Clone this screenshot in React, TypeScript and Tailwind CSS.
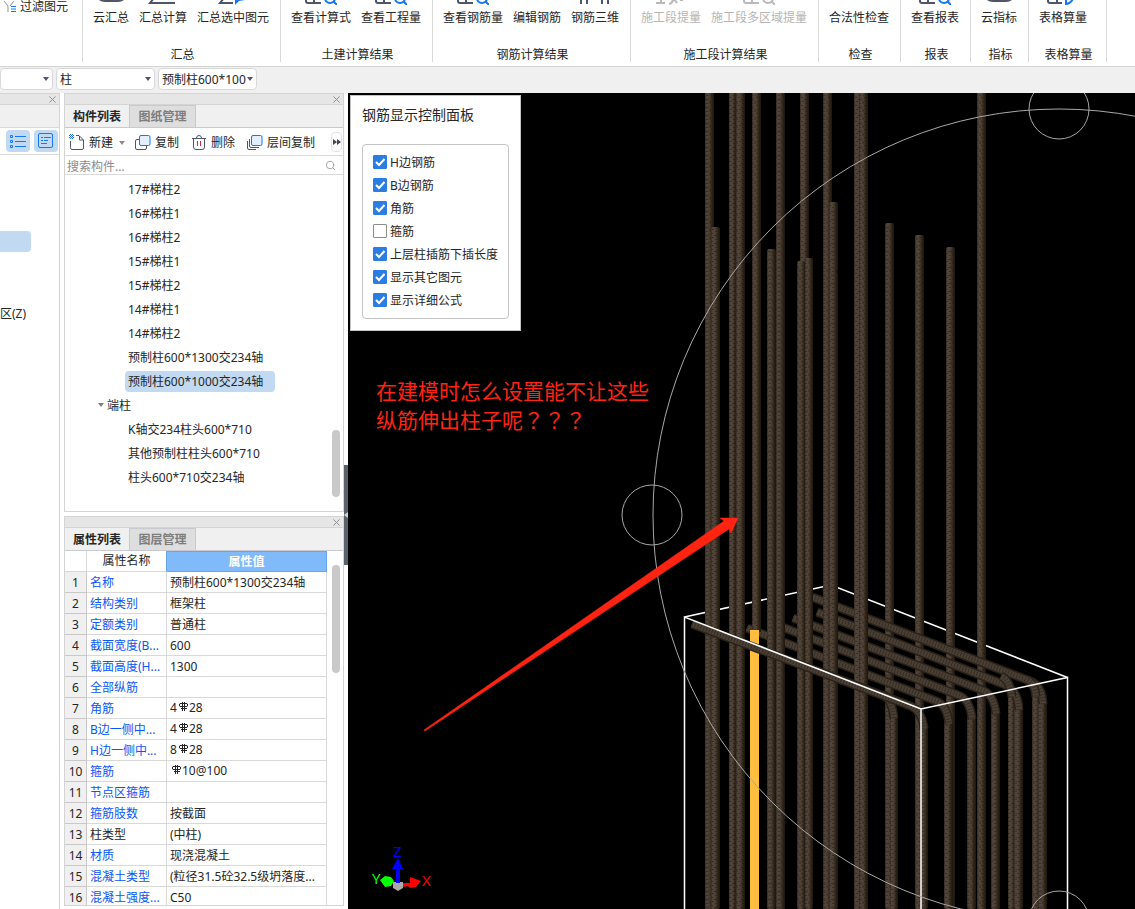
import { X, Search } from 'lucide-react';

type IconKind = 'cloud' | 'sum' | 'sumSelect' | 'view' | 'none' | 'rebar' | 'section' | 'sheet';

interface RibbonItem {
  label: string;
  icon: IconKind;
  disabled?: boolean;
}

interface RibbonGroup {
  title: string;
  width: string;
  items: RibbonItem[];
}

const ribbon: RibbonGroup[] = [
  {
    title: '汇总',
    width: 'w-[198px]',
    items: [
      { label: '云汇总', icon: 'cloud' },
      { label: '汇总计算', icon: 'sum' },
      { label: '汇总选中图元', icon: 'sumSelect' },
    ],
  },
  {
    title: '土建计算结果',
    width: 'w-[152px]',
    items: [
      { label: '查看计算式', icon: 'view' },
      { label: '查看工程量', icon: 'view' },
    ],
  },
  {
    title: '钢筋计算结果',
    width: 'w-[198px]',
    items: [
      { label: '查看钢筋量', icon: 'view' },
      { label: '编辑钢筋', icon: 'none' },
      { label: '钢筋三维', icon: 'rebar' },
    ],
  },
  {
    title: '施工段计算结果',
    width: 'w-[188px]',
    items: [
      { label: '施工段提量', icon: 'section', disabled: true },
      { label: '施工段多区域提量', icon: 'view', disabled: true },
    ],
  },
  { title: '检查', width: 'w-[82px]', items: [{ label: '合法性检查', icon: 'none' }] },
  { title: '报表', width: 'w-[70px]', items: [{ label: '查看报表', icon: 'view' }] },
  { title: '指标', width: 'w-[58px]', items: [{ label: '云指标', icon: 'cloud' }] },
  { title: '表格算量', width: 'w-[78px]', items: [{ label: '表格算量', icon: 'sheet' }] },
];

const components = [
  '17#梯柱2',
  '16#梯柱1',
  '16#梯柱2',
  '15#梯柱1',
  '15#梯柱2',
  '14#梯柱1',
  '14#梯柱2',
  '预制柱600*1300交234轴',
  '预制柱600*1000交234轴',
];

const endColumns = ['K轴交234柱头600*710', '其他预制柱柱头600*710', '柱头600*710交234轴'];

interface Property {
  name: string;
  value: string;
  // bar diameter and spacing, drawn after the rebar grade sign
  bar?: string;
  plain?: boolean;
}

const properties: Property[] = [
  { name: '名称', value: '预制柱600*1300交234轴' },
  { name: '结构类别', value: '框架柱' },
  { name: '定额类别', value: '普通柱' },
  { name: '截面宽度(B...', value: '600' },
  { name: '截面高度(H...', value: '1300' },
  { name: '全部纵筋', value: '' },
  { name: '角筋', value: '4', bar: '28' },
  { name: 'B边一侧中...', value: '4', bar: '28' },
  { name: 'H边一侧中...', value: '8', bar: '28' },
  { name: '箍筋', value: '', bar: '10@100' },
  { name: '节点区箍筋', value: '' },
  { name: '箍筋肢数', value: '按截面' },
  { name: '柱类型', value: '(中柱)', plain: true },
  { name: '材质', value: '现浇混凝土' },
  { name: '混凝土类型', value: '(粒径31.5砼32.5级坍落度...' },
  { name: '混凝土强度...', value: 'C50' },
];

const displayOptions = [
  { label: 'H边钢筋', checked: true },
  { label: 'B边钢筋', checked: true },
  { label: '角筋', checked: true },
  { label: '箍筋', checked: false },
  { label: '上层柱插筋下插长度', checked: true },
  { label: '显示其它图元', checked: true },
  { label: '显示详细公式', checked: true },
];

// x, top, bottom, width
type Bar = [number, number, number, number];

const backBars: Bar[] = [
  [885, 223, 909, 9],
  [915, 235, 909, 9],
  [946, 247, 909, 9],
  [977, 93, 909, 9],
  [890, 714, 909, 8],
  [920, 724, 909, 8],
  [944, 720, 909, 9],
  [967, 716, 909, 9],
  [991, 710, 909, 9],
  [1008, 694, 909, 8],
  [1014, 706, 909, 9],
  [1032, 694, 909, 9],
  [1038, 700, 909, 9],
];

const frontBars: Bar[] = [
  [705, 93, 909, 9],
  [711, 227, 909, 9],
  [729, 93, 909, 8],
  [736, 93, 909, 9],
  [752, 93, 632, 9],
  [767, 249, 909, 9],
  [776, 93, 909, 9],
  [800, 93, 262, 9],
  [797, 261, 909, 9],
  [805, 258, 909, 8],
  [823, 93, 909, 9],
  [829, 202, 272, 9],
  [829, 272, 909, 9],
  [854, 93, 909, 9],
  [859, 93, 909, 9],
];

const bentBars = [
  'M812 597 L1030 681 Q1042 685 1043 704',
  'M817 612 L1003 684 Q1018 689 1019 710',
  'M793 618 L982 690 Q994 694 996 714',
  'M777 625 L958 695 Q970 699 972 719',
  'M747 628 L936 701 Q947 705 949 724',
  'M1001 676 Q1010 680 1012 697',
  'M1028 680 Q1035 684 1036 697',
  'M882 694 Q892 699 894 718',
];

const frontBent = 'M692 624 L908 705 Q922 709 924 729';

const RibbonIcon = ({ kind, disabled }: { kind: IconKind; disabled?: boolean }) => {
  const dark = disabled ? '#b9b9b9' : '#50566a';
  const blue = disabled ? '#b9b9b9' : '#1677ee';
  return (
    <svg viewBox="0 0 32 5" className="h-[5px] w-8" fill="none" strokeWidth={2}>
      {kind === 'cloud' && <path d="M2 -2 Q5 2 10 2 H23 Q28 2 31 -2 Z" fill={dark} />}
      {kind === 'sum' && <path d="M7 -2 L3 3 H28" stroke={dark} />}
      {kind === 'sumSelect' && (
        <>
          <path d="M7 -2 L3 3 H16" stroke={dark} />
          <path d="M18 -2 L18 5 L22 1 L28 0 Z" fill={blue} />
        </>
      )}
      {kind === 'view' && (
        <>
          <path d="M1 -2 V1 Q1 3 3 3 H16 M9 -2 V3" stroke={dark} />
          <circle cx={25} cy={-2} r={5} stroke={blue} />
          <path d="M28 1 L32 5" stroke={blue} />
        </>
      )}
      {kind === 'rebar' && <path d="M2 -1 V4 M8 -1 V4 M23 -1 V4 M29 -1 V4" stroke={dark} />}
      {kind === 'section' && <path d="M1 3 H10 M6 -1 V3 M14 4 Q18 3 18 -1 M19 -1 L22 3 M25 0 H28" stroke={dark} />}
      {kind === 'sheet' && (
        <>
          <path d="M1 -2 V1 Q1 3 3 3 H15 M10 -2 V3" stroke={dark} />
          <path d="M19 -1 V4 Q23 4 26 -1" stroke={blue} />
        </>
      )}
    </svg>
  );
};

const Caret = ({ className }: { className: string }) => (
  <svg viewBox="0 0 6 4" className={`h-1 w-1.5 ${className}`}>
    <path d="M0 0 H6 L3 4 Z" fill="currentColor" />
  </svg>
);

const Dropdown = ({ label, value, width }: { label: string; value: string; width: string }) => (
  <div className={`relative h-[22px] shrink-0 ${width}`}>
    <select
      aria-label={label}
      className="h-full w-full appearance-none overflow-hidden rounded-sm border border-[#d9d9d9] bg-white pt-0.5 pr-2 pl-[3px] text-xs leading-[18px] text-[#262626]"
    >
      <option>{value}</option>
    </select>
    <Caret className="pointer-events-none absolute top-[9px] right-1 text-[#50566a]" />
  </div>
);

const TitleStrip = () => (
  <div className="flex h-3 shrink-0 items-center justify-end border-y border-[#d4d4d4] bg-[#e6e6e6] pr-0.5">
    <button type="button" aria-label="关闭">
      <X className="h-[9px] w-[9px] scale-125 text-[#8c8c8c]" strokeWidth={2} />
    </button>
  </div>
);

const Tabs = ({ active, other }: { active: string; other: string }) => (
  <div className="flex h-[23px] shrink-0 border-b border-[#c9cad0] bg-[#f0f0f0] text-xs font-bold">
    <button type="button" className="w-16 bg-[#f0f0f0] pt-0.5 text-[#262626]">{active}</button>
    <button type="button" className="w-[67px] border-x border-t border-[#c9cad0] bg-[#dedede] pt-px text-[#7d7d7d]">{other}</button>
  </div>
);

const CopyIcon = ({ layers }: { layers?: boolean }) => (
  <svg viewBox="0 0 16 16" className="mb-0.5 h-4 w-4" fill="none" strokeWidth={1}>
    {layers ? (
      <path d="M2.500 5 V12 Q2.500 13.500 4 13.500 H12 M.5 7 V14 Q.5 15.500 2 15.500 H9" stroke="#50566a" />
    ) : (
      <path d="M4 5.500 H2 Q.5 5.500 .5 7 V14 Q.5 15.500 2 15.500 H10 Q11.500 15.500 11.500 14 V12" stroke="#50566a" />
    )}
    <rect x={4.500} y={1.500} width={10.500} height={10} rx={1.500} fill="#e2efff" stroke="#1677ee" />
  </svg>
);

const RebarSign = () => (
  <svg viewBox="0 0 12 11" className="mb-1 h-[11px] w-3" fill="none" stroke="#262626" strokeWidth={1}>
    <path d="M3 2.500 H10 L10.500 3 V5 L10 5.500 H3 L2.500 5 V3 Z M5.500 1 V10 M7.500 1 V10 M4 7.500 H10" />
  </svg>
);

const BarShape = ({ bar }: { bar: Bar }) => {
  const [x, top, bottom, width] = bar;
  return (
    <g>
      <rect x={x} y={top} width={width} height={bottom - top} rx={top > 93 ? 2 : 0} fill="url(#steel)" />
      <rect x={x} y={top + 2} width={width} height={bottom - top - 2} fill="url(#ribs)" />
    </g>
  );
};

const BentShape = ({ d }: { d: string }) => (
  <g fill="none">
    <path d={d} stroke="#2a2219" strokeWidth={9} />
    <path d={d} stroke="#4b4035" strokeWidth={6} />
    <path d={d} stroke="#352c23" strokeWidth={5} strokeDasharray="1 2" />
  </g>
);

const Scene = () => (
  <svg viewBox="348 93 787 816" preserveAspectRatio="xMinYMin slice" className="absolute inset-0 h-full w-full">
    <defs>
      <linearGradient id="steel">
        <stop offset="0" stopColor="#352c25" />
        <stop offset="0.2" stopColor="#54473c" />
        <stop offset="0.5" stopColor="#4b3f35" />
        <stop offset="0.7" stopColor="#35291a" />
        <stop offset="1" stopColor="#1b150d" />
      </linearGradient>
      <pattern id="ribs" width="9" height="8" patternUnits="userSpaceOnUse">
        <path d="M0 1.500 H2 M3 3.500 H5 M1 5.500 H3 M6 2 V5 M4 7.500 H6 M8 5 V8" stroke="#1d1715" strokeWidth="1" opacity="0.5" />
      </pattern>
    </defs>

    <path d="M684.500 617 L831 585 L1067.500 677.500" fill="none" stroke="#fff" strokeWidth={1.500} />
    {backBars.map((bar) => <BarShape key={bar.join()} bar={bar} />)}
    {bentBars.map((d) => <BentShape key={d} d={d} />)}
    {frontBars.map((bar) => <BarShape key={bar.join()} bar={bar} />)}
    <rect x={750} y={630} width={9} height={279} fill="#ffbe3d" />
    <BentShape d={frontBent} />
    <path d="M684.500 909 V617 L921 709 L1067.500 677.500 V909 M921 709 V909" fill="none" stroke="#fff" strokeWidth={1.500} />

    <g fill="none" stroke="#a8a8a8" strokeWidth={1}>
      <circle cx={1059} cy={515} r={406} />
      <circle cx={1059} cy={109} r={30} />
      <circle cx={652} cy={515} r={30} />
      <circle cx={1059} cy={921} r={30} />
    </g>

    <path d="M424 730 L724 521 L720 518 L738 518 L731 533 L729 529 L425 731 Z" fill="#ff2412" stroke="#ff2412" strokeWidth={0.500} />

    <g fontFamily="Noto Sans, sans-serif" fontSize={15}>
      <path d="M380 880 L385 876 L391 877 L394 881 L391 886 L385 887 Z" fill="#00ff00" />
      <path d="M403 883 H410 V877 L421 881 L416 887 L410 888 L408 886 L403 887 Z" fill="#ff0000" />
      <path d="M393 882 H403 V888 L398 891 L393 888 Z" fill="#a9a9a9" />
      <path d="M396 883 V869 H392 L398 858 L403 869 H400 V883 Z" fill="#0000ff" />
      <text x={372} y={884} fill="#00ff00">Y</text>
      <text x={393} y={857} fill="#0000ff">Z</text>
      <text x={422} y={886} fill="#ff0000">X</text>
    </g>
  </svg>
);

const DisplayPanel = () => (
  <form className="absolute top-[2px] left-[2px] w-[171px] border border-[#c4c4c4] bg-white px-[11px] pt-[9px] pb-[11px]">
    <h2 className="text-sm leading-5">钢筋显示控制面板</h2>
    <div className="mt-[19px] rounded border border-[#c4c4c4] px-2.5 py-[6px]">
      {displayOptions.map((option) => (
        <label key={option.label} className="flex h-[23px] items-center gap-[3px] whitespace-nowrap">
          <span className="relative mb-0.5 h-3.5 w-3.5 shrink-0">
            <input
              type="checkbox"
              defaultChecked={option.checked}
              className="peer block h-3.5 w-3.5 appearance-none rounded-[1px] border border-[#8c8c8c] bg-white checked:border-[#2b7de1] checked:bg-[#2b7de1]"
            />
            <svg viewBox="0 0 14 14" className="pointer-events-none absolute inset-0 hidden h-3.5 w-3.5 peer-checked:block">
              <path d="M3 7 L6 10 L11.500 4" fill="none" stroke="#fff" strokeWidth={2} />
            </svg>
          </span>
          {option.label}
        </label>
      ))}
    </div>
  </form>
);

const ComponentPanel = () => (
  <section className="relative shrink-0 border-x border-b border-[#d4d4d4] bg-white">
    <TitleStrip />
    <Tabs active="构件列表" other="图纸管理" />
    <div className="flex h-7 items-center border-b border-[#d9d9d9] pt-0.5 pl-1 whitespace-nowrap">
      <button type="button" className="flex items-center gap-1">
        <svg viewBox="0 0 16 16" className="mb-0.5 h-4 w-4" fill="none" stroke="#50566a">
          <path d="M1.500 7 V13.500 Q1.500 15.500 3 15.500 H13 Q14.500 15.500 14.500 14 V6 L10 1.500 H7 M10.500 2 V6 H14" />
          <path d="M0 1.500 H5 M0 3.500 H5 M1 .5 H5 M1 2.500 H5 M1 4.500 H5" stroke="#1677ee" strokeDasharray="1 1" />
        </svg>
        新建
        <Caret className="ml-0.5 text-[#8c8c8c]" />
      </button>
      <button type="button" className="ml-2.5 flex items-center gap-1"><CopyIcon />复制</button>
      <button type="button" className="ml-3 flex items-center gap-1">
        <svg viewBox="0 0 16 16" className="mb-0.5 h-4 w-4" fill="none" stroke="#50566a">
          <path d="M1 4.500 H15 M2.500 4.500 V13 Q2.500 15.500 5 15.500 H11 Q13.500 15.500 13.500 13 V4.500 M5.500 4 Q5.500 1.500 8 1.500 Q10.500 1.500 10.500 4" />
          <path d="M6.500 7 V12 M9.500 7 V12" stroke="#e0242b" />
        </svg>
        删除
      </button>
      <button type="button" className="ml-3 flex items-center gap-1"><CopyIcon layers />层间复制</button>
      <button type="button" aria-label="更多" className="mr-[1px] mb-0.5 ml-auto flex h-5 w-[11px] items-center justify-center rounded border border-[#e4e4e4]">
        <svg viewBox="0 0 8 6" className="h-1.5 w-2 shrink-0"><path d="M0 0 L4 3 L0 6 Z M4 0 L8 3 L4 6 Z" fill="#404654" /></svg>
      </button>
    </div>
    <div className="flex h-[19px] items-center border-b border-[#d9d9d9] pr-[7px] pl-0.5">
      <input type="text" aria-label="搜索构件" placeholder="搜索构件..." className="h-[18px] min-w-0 flex-1 pt-0.5 text-xs leading-4 outline-none placeholder:text-[#8c8c8c]" />
      <Search className="h-[11px] w-[11px] text-[#9a9a9a]" />
    </div>
    <ul className="pt-0.5 pb-[22px] leading-[21px]">
      {components.map((name, i) => (
        <li key={name} className="flex h-6 items-center pl-[60px]">
          <span className={i === 8 ? 'w-[150px] rounded-sm bg-[#c2d9f2] pl-[3px]' : 'pl-[3px]'}>{name}</span>
        </li>
      ))}
      <li className="flex h-6 items-center gap-[3px] pl-[33px]">
        <Caret className="text-[#7d7d7d]" />
        <span>端柱</span>
      </li>
      {endColumns.map((name) => (
        <li key={name} className="flex h-6 items-center pl-[63px]">{name}</li>
      ))}
    </ul>
    <div className="absolute right-[3px] bottom-[14px] h-[67px] w-2 rounded-full bg-[#c9c9c9]" />
  </section>
);

const PropertyPanel = () => (
  <section className="relative mt-1 mb-[3px] flex min-h-0 flex-1 flex-col overflow-hidden border-x border-b border-[#d4d4d4] bg-white">
    <TitleStrip />
    <Tabs active="属性列表" other="图层管理" />
    <div className="min-h-0 flex-1 overflow-hidden">
      <table className="w-[262px] table-fixed border-separate border-spacing-0">
        <colgroup>
          <col className="w-[22px]" />
          <col className="w-20" />
          <col className="w-40" />
        </colgroup>
        <thead>
          <tr className="h-[21px]">
            <th className="border-r border-b border-[#d9d9d9] p-0" />
            <th className="border-r border-b border-r-[#64a7ec] border-b-[#d9d9d9] p-0 font-normal">属性名称</th>
            <th className="border-y border-r border-[#64a7ec] bg-[#80bafa] p-0 leading-[19px] font-bold text-white">属性值</th>
          </tr>
        </thead>
        <tbody>
          {properties.map((property, i) => (
            <tr key={property.name} className="h-[21px] leading-[18px]">
              <th className="border-r border-b border-[#c9c9c9] bg-[#f0f0f0] p-0 pt-0.5 font-normal">{i + 1}</th>
              <td className={`overflow-hidden border-r border-b border-[#d9d9d9] p-0 pt-0.5 pl-[3px] whitespace-nowrap ${property.plain ? '' : 'text-[#0b57f5]'}`}>
                {property.name}
              </td>
              <td className="overflow-hidden border-r border-b border-[#d9d9d9] p-0 pl-[3px] whitespace-nowrap">
                {property.bar ? (
                  <span className="flex h-5 items-center">
                    {property.value}
                    <RebarSign />
                    {property.bar}
                  </span>
                ) : (
                  <span className="block pt-0.5">{property.value}</span>
                )}
              </td>
            </tr>
          ))}
        </tbody>
      </table>
    </div>
    <div className="absolute top-[49px] right-[3px] h-[108px] w-2 rounded-full bg-[#c9c9c9]" />
  </section>
);

const App = () => (
  <div className="flex h-screen flex-col overflow-hidden bg-white font-['Noto_Sans','Noto_Sans_CJK_SC',sans-serif] text-xs leading-4 text-[#262626]">
    <header className="flex h-[67px] shrink-0 border-b border-[#d4d4d4] whitespace-nowrap">
      <div className="h-[62px] w-[83px] shrink-0 border-r border-[#d9d9d9] pl-1">
        <button type="button" className="flex items-center gap-1 leading-[14px]">
          <svg viewBox="0 0 12 12" className="h-3 w-3" fill="none">
            <path d="M0 0 L4 5 V11 M10 0 L6 5" stroke="#8c8f99" />
            <path d="M7 5.500 H12 M7 8 H12 M7 10.500 H12" stroke="#1677ee" />
          </svg>
          过滤图元
        </button>
      </div>
      {ribbon.map((group) => (
        <div key={group.title} className={`flex h-[62px] shrink-0 flex-col justify-between border-r border-[#d9d9d9] ${group.width}`}>
          <div className="flex gap-2.5 pl-2.5">
            {group.items.map((item) => (
              <button
                key={item.label}
                type="button"
                disabled={item.disabled}
                className="flex flex-col items-center gap-[5px] disabled:text-[#b5b5b5]"
              >
                <RibbonIcon kind={item.icon} disabled={item.disabled} />
                {item.label}
              </button>
            ))}
          </div>
          <div className="pl-0.5 text-center leading-[14px]">{group.title}</div>
        </div>
      ))}
    </header>

    <div className="flex h-[26px] shrink-0 gap-[3px] bg-[#f0f0f0] pt-px">
      <Dropdown label="楼层" value="" width="w-[53px]" />
      <Dropdown label="构件类型" value="柱" width="w-[99px]" />
      <Dropdown label="构件名称" value="预制柱600*100" width="w-[99px]" />
    </div>

    <main className="flex min-h-0 flex-1">
      <aside className="w-[60px] shrink-0 border-r border-[#d4d4d4]">
        <TitleStrip />
        <div className="h-[22px] bg-[#f0f0f0]" />
        <div className="flex h-7 items-center gap-1 border-y border-[#d9d9d9] pl-1.5">
          <button type="button" aria-label="列表" className="flex h-[22px] w-6 shrink-0 items-center justify-center rounded-sm bg-[#c2d9f2]">
            <svg viewBox="0 0 16 14" className="h-3.5 w-4" fill="none" stroke="#1677ee">
              <path d="M5 2.500 H16 M5 7.500 H16 M5 12.500 H16" />
              <path d="M.5 1.500 h2 v2 h-2 Z M.5 6.500 h2 v2 h-2 Z M.5 11.500 h2 v2 h-2 Z" />
            </svg>
          </button>
          <button type="button" aria-label="详情" className="flex h-[22px] w-6 shrink-0 items-center justify-center rounded-sm bg-[#c2d9f2]">
            <svg viewBox="0 0 16 16" className="h-4 w-4" fill="none" stroke="#1677ee">
              <rect x={0.500} y={0.500} width={14} height={14} rx={1.500} />
              <path d="M3 4.500 H5 M6 4.500 H13 M3 7.500 H5 M6 7.500 H10 M3 10.500 H9" />
            </svg>
          </button>
        </div>
        <div className="mt-[76px] h-[21px] w-[31px] rounded-r-sm bg-[#c2d9f2]" />
        <div className="mt-[54px] whitespace-nowrap">区(Z)</div>
      </aside>

      <div className="ml-1 flex w-[280px] shrink-0 flex-col">
        <ComponentPanel />
        <PropertyPanel />
      </div>

      <div className="flex w-1 shrink-0 flex-col justify-center">
        <button type="button" aria-label="收起面板" className="mt-7 flex h-[100px] items-center bg-[#59636e]">
          <svg viewBox="0 0 4 6" className="h-1.5 w-1"><path d="M4 0 V6 L0 3 Z" fill="#d4d4d4" /></svg>
        </button>
      </div>

      <div className="relative min-w-0 flex-1 overflow-hidden bg-black">
        <Scene />
        <DisplayPanel />
        <p className="absolute top-[284px] left-7 text-[21px] leading-7 whitespace-nowrap text-[#ff2412]">
          在建模时怎么设置能不让这些
          <br />
          纵筋伸出柱子呢
          <span lang="zh-TW" className="font-['Noto_Sans_CJK_TC',sans-serif]">？？？</span>
        </p>
      </div>
    </main>
  </div>
);

export default App;
